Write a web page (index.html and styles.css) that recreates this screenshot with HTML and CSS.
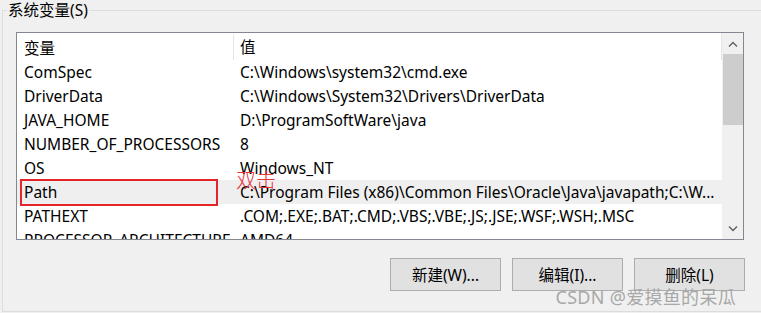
FILE: index.html
```html
<!DOCTYPE html>
<html>
<head>
    <title>系统变量</title>
    <link rel="stylesheet" href="styles.css">
</head>
<body>
<fieldset class="group">
    <legend>系统变量(S)</legend>
    <div class="listbox">
        <div class="list-view">
            <div class="list-head">
                <div class="cell name">变量</div>
                <div class="cell value">值</div>
            </div>
            <div class="row"><div class="cell name">ComSpec</div><div class="cell value">C:\Windows\system32\cmd.exe</div></div>
            <div class="row"><div class="cell name">DriverData</div><div class="cell value">C:\Windows\System32\Drivers\DriverData</div></div>
            <div class="row"><div class="cell name">JAVA_HOME</div><div class="cell value">D:\ProgramSoftWare\java</div></div>
            <div class="row"><div class="cell name">NUMBER_OF_PROCESSORS</div><div class="cell value">8</div></div>
            <div class="row"><div class="cell name">OS</div><div class="cell value">Windows_NT</div></div>
            <div class="row selected"><div class="cell name">Path</div><div class="cell value">C:\Program Files (x86)\Common Files\Oracle\Java\javapath;C:\W...</div></div>
            <div class="row"><div class="cell name">PATHEXT</div><div class="cell value">.COM;.EXE;.BAT;.CMD;.VBS;.VBE;.JS;.JSE;.WSF;.WSH;.MSC</div></div>
            <div class="row"><div class="cell name">PROCESSOR_ARCHITECTURE</div><div class="cell value">AMD64</div></div>
            <!-- annotation drawn over the list -->
            <div class="mark-box"></div>
            <div class="mark-text">双击</div>
        </div>
        <div class="scrollbar">
            <div class="arrow">
                <svg viewBox="0 0 10 6" width="10" height="6"><path d="M1 5.5 L5 1.5 L9 5.5" fill="none" stroke="#606060" stroke-width="1.4"/></svg>
            </div>
            <div class="track"><div class="thumb"></div></div>
            <div class="arrow">
                <svg viewBox="0 0 10 6" width="10" height="6"><path d="M1 0.5 L5 4.5 L9 0.5" fill="none" stroke="#606060" stroke-width="1.4"/></svg>
            </div>
        </div>
    </div>
    <div class="buttons">
        <button>新建(W)...</button>
        <button>编辑(I)...</button>
        <button>删除(L)</button>
    </div>
</fieldset>
<div class="watermark">CSDN @爱摸鱼的呆瓜</div>
</body>
</html>
```

FILE: styles.css
```css
html, body {
    margin: 0;
    width: 761px;
    height: 313px;
    overflow: hidden;
}
body {
    position: relative;
    background-color: #F0F0F0;
    font-family: "Noto Sans", "Noto Sans CJK SC", sans-serif;
    font-size: 15.5px;
    color: #000000;
}
.group {
    box-sizing: border-box;
    margin: 0 0 0 2px;
    padding: 0;
    height: 312px;
    border: 1px solid #DCDCDC;
    border-right: none;
}
.group legend {
    margin-left: 4px;
    padding: 0 1px;
    line-height: 20px;
    font-size: 15.5px;
}
/* list with columns */
.listbox {
    display: flex;
    width: 728px;
    height: 208px;
    box-sizing: border-box;
    margin: 12px 0 0 13px;
    border: 1px solid #828790;
    background-color: #FFFFFF;
}
.list-view {
    position: relative;
    flex: 1;
    overflow: hidden;
}
.list-head, .row {
    display: grid;
    grid-template-columns: 217px 1fr;
}
.list-head {
    height: 27px;
    align-items: center;
    border-right: 1px solid #E5E5E5;
}
.list-head .name {
    align-self: stretch;
    display: flex;
    align-items: center;
    margin-top: 1px;
    border-right: 1px solid #E5E5E5;
}
.row {
    height: 24px;
    align-items: center;
}
.row.selected {
    background-color: #EFEFEF;
}
.cell {
    white-space: nowrap;
    overflow: hidden;
}
.cell.name {
    padding-left: 7px;
}
.cell.value {
    padding-left: 6px;
    padding-right: 4px;
    text-overflow: ellipsis;
}
.mark-box {
    position: absolute;
    left: 3px;
    top: 146px;
    width: 198px;
    height: 27px;
    box-sizing: border-box;
    border: 2px solid #E4262B;
}
.mark-text {
    position: absolute;
    left: 219px;
    top: 134px;
    font-family: "Noto Sans CJK SC", sans-serif;
    font-size: 20px;
    font-weight: 300;
    color: #E8353A;
    line-height: 26px;
}
/* scrollbar */
.scrollbar {
    display: flex;
    flex-direction: column;
    width: 21px;
    background-color: #F0F0F0;
}
.scrollbar .arrow {
    height: 21px;
    display: flex;
    align-items: center;
    justify-content: center;
}
.scrollbar .track {
    flex: 1;
}
.scrollbar .thumb {
    margin: 0 0 0 1px;
    height: 71px;
    background-color: #CDCDCD;
}
/* buttons */
.buttons {
    display: flex;
    justify-content: flex-end;
    gap: 11px;
    margin: 18px 16px 0 0;
}
.buttons button {
    width: 111px;
    height: 33px;
    background-color: #E1E1E1;
    border: 1px solid #ADADAD;
    font-family: "Noto Sans", "Noto Sans CJK SC", sans-serif;
    font-size: 15.5px;
    color: #000000;
}
.watermark {
    position: absolute;
    right: 25px;
    top: 283px;
    font-family: "Noto Sans", "Noto Sans CJK SC", sans-serif;
    font-size: 18px;
    color: #A8A8A8;
    letter-spacing: 0.3px;
}
```
